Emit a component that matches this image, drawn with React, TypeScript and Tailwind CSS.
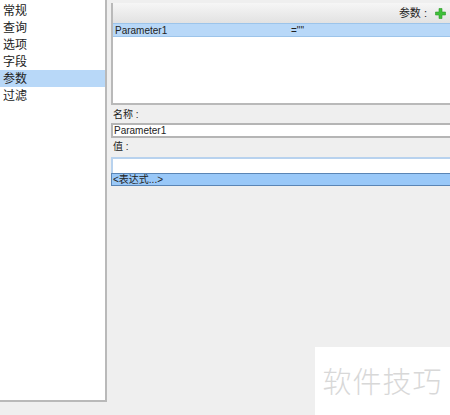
import React from "react";

const font = { fontFamily: '"Liberation Sans", "Noto Sans CJK SC", sans-serif' };

const navItems = ["常规", "查询", "选项", "字段", "参数", "过滤"];

function PlusIcon() {
  return (
    <svg width="11" height="11" viewBox="0 0 11 11">
      <path d="M4 0.5h3v3.5h3.5v3H7v3.5H4V7H0.5V4H4z" fill="#3fbf3a" stroke="#2e9a2a" strokeWidth="0.6" />
    </svg>
  );
}

export default function App() {
  return (
    <div className="relative flex h-[415px] w-[450px] overflow-hidden bg-[#efefef] text-[11px] text-[#222]" style={font}>
      {/* Left nav list */}
      <div className="flex h-[402px] w-[107px] shrink-0 flex-col border-r-2 border-b-2 border-[#b9b9b9] bg-white pt-[2px]">
        {navItems.map((item) => (
          <div
            key={item}
            className={`flex h-[17px] items-center pl-[3px] text-[12px] ${item === "参数" ? "bg-[#b8d8f8]" : ""}`}
          >
            {item}
          </div>
        ))}
      </div>

      {/* Right side */}
      <div className="ml-[4px] flex flex-1 flex-col pt-[3px]">
        <div className="flex h-[102px] flex-col border-l-2 border-b-2 border-[#b9b9b9] bg-white">
          <div className="flex h-[20px] items-center justify-end gap-[8px] bg-gradient-to-b from-[#f6f6f6] to-[#e2e2e2] pr-[4px] text-[11px]">
            <span>参数 :</span>
            <PlusIcon />
          </div>
          <div className="flex h-[14px] items-center border-y border-[#9cc4ea] bg-[#b8d8f8] pl-[2px] text-[10px]">
            <span className="w-[176px]">Parameter1</span>
            <span>=""</span>
          </div>
        </div>

        <div className="mt-[3px] h-[14px] pl-[2px] text-[10px] leading-[14px]">名称 :</div>
        <div className="mt-[1px] flex h-[15px] items-center border-y-2 border-l-2 border-[#b5b5b5] bg-white pl-[1px] text-[10px]">
          Parameter1
        </div>

        <div className="mt-[2px] h-[14px] pl-[2px] text-[10px] leading-[14px]">值 :</div>
        <div className="mt-[3px] h-[16px] border-t-2 border-l-2 border-[#b8d2ee] bg-white"></div>
        <div className="flex h-[13px] items-center border-y border-l border-[#5a85b5] bg-[#99c8f8] pl-[1px] text-[10px]">
          &lt;表达式...&gt;
        </div>
      </div>

      {/* Watermark */}
      <div className="absolute bottom-0 right-0 flex h-[68px] w-[135px] items-center justify-center bg-white">
        <span className="text-[29px] tracking-[1px] text-[#d8d8d8]" style={{ fontFamily: '"Noto Sans CJK SC", sans-serif', fontWeight: 300 }}>
          软件技巧
        </span>
      </div>
    </div>
  );
}
